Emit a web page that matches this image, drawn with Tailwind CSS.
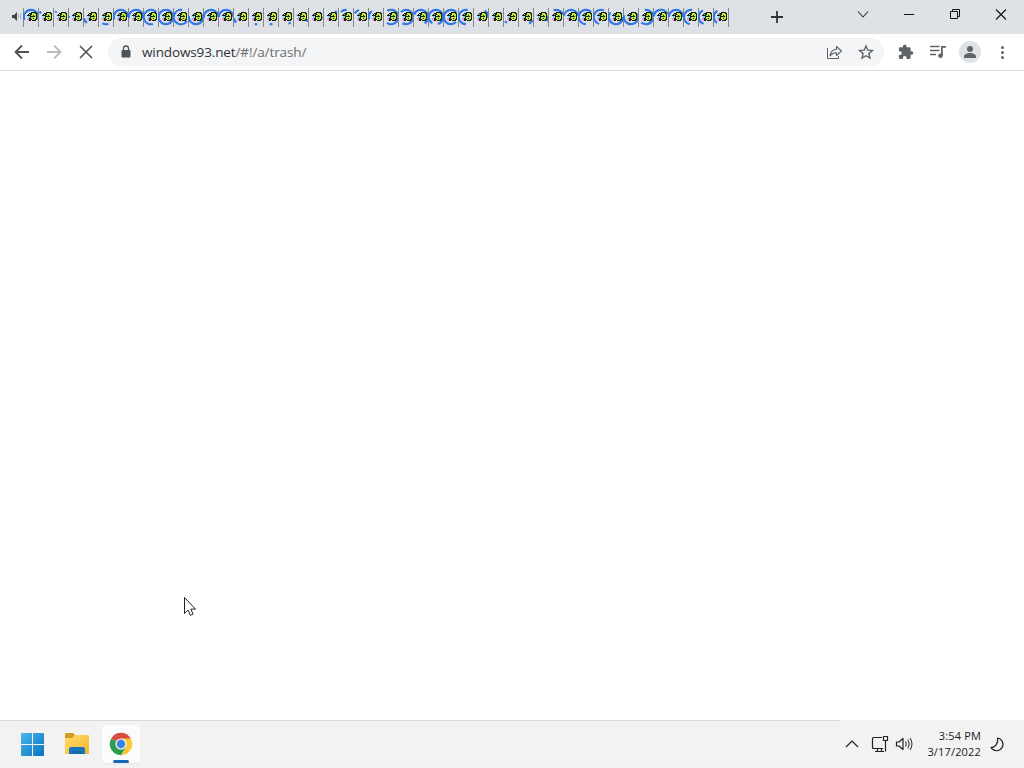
<!DOCTYPE html>
<html lang="en">
<head>
  <meta charset="UTF-8" />
  <meta name="viewport" content="width=device-width, initial-scale=1.0"/>
  <title>windows93.net</title>
  <script src="https://cdn.jsdelivr.net/npm/@tailwindcss/browser@4"></script>
</head>
<body class="w-[1024px] h-[768px] overflow-hidden flex flex-col bg-white font-['Open_Sans','Noto_Sans',sans-serif]">

  <!-- Tab strip -->
  <header class="h-[34px] shrink-0 flex bg-[#dee1e6]">
    <svg class="w-[23px] h-[34px] shrink-0" viewBox="0 0 23 34">
      <path d="M12 15h2l3-3v9l-3-3h-2z" fill="#3c4043"/>
      <path d="M18.5 14.500v4M20.500 13.500v6" stroke="#a5a8ac" stroke-width=".8"/>
    </svg>
    <div id="tabs" class="flex w-[706px] shrink-0"></div>
    <svg class="w-[96px] h-[34px] shrink-0" viewBox="729 0 96 34">
      <path d="M777 11v12M771 17h12" stroke="#303337" stroke-width="1.800"/>
    </svg>
    <svg class="w-[199px] h-[34px] shrink-0" viewBox="825 0 199 34" fill="none" stroke="#111">
      <path d="M858 11.500l5 5.500 5-5.500" stroke="#333" stroke-width="1.100"/>
      <path d="M904 14.500h10"/>
      <path d="M950.500 11.500h7v7h-7zM952.500 11v-1.500h7v7h-2"/>
      <path d="M996 9.500l10 10M1006 9.500l-10 10" stroke-width="1.100"/>
    </svg>
  </header>

  <!-- Toolbar -->
  <nav class="h-[37px] shrink-0 flex items-center border-b border-[#dadce0] bg-white">
    <svg class="w-[108px] h-9 shrink-0" viewBox="0 34 108 36" fill="none" stroke="#505356" stroke-width="1.800">
      <path d="M29 52H16M22 45.500L15.500 52l6.500 6.500"/>
      <path d="M47 52h13M54 45.500l6.500 6.500-6.500 6.500" stroke="#b9bbbe"/>
      <path d="M80 46l12 12M92 46L80 58" stroke-width="1.600"/>
    </svg>
    <div class="w-[776px] h-7 shrink-0 flex items-center rounded-full bg-[#f4f5f6]">
      <svg class="w-[34px] h-7 shrink-0" viewBox="108 38 34 28">
        <rect x="121.500" y="50" width="9" height="7.500" rx="1" fill="#505356"/>
        <path d="M123.500 50.500v-2a2.500 2.500 0 0 1 5 0v2" fill="none" stroke="#505356" stroke-width="1.300"/>
      </svg>
      <div id="address" class="w-[166px] text-[13.5px] tracking-[-0.12px] leading-7 whitespace-nowrap text-[#303236]">windows93.net<span class="text-[#6b6f73]">/#!/a/trash/</span></div>
      <svg class="ml-auto w-[64px] h-7 shrink-0" viewBox="820 38 64 28" fill="none" stroke="#5f6368">
        <path d="M827.500 48v10.500h11V56"/>
        <path d="M836.500 46.500l5 4.500-5 4.500v-2.700c-3 0-5 1-6.500 3 .5-3.500 2.500-6.300 6.500-6.600z" stroke-linejoin="round" stroke-width="1.100"/>
        <path d="M866 46l1.800 4.200 4.600.4-3.500 3 1.100 4.500-4-2.400-4 2.400 1.100-4.500-3.500-3 4.600-.4z" stroke-width="1.400"/>
      </svg>
    </div>
    <svg class="w-[140px] h-9 shrink-0" viewBox="884 34 140 36" fill="#5f6368">
      <path transform="translate(897.500 43.700) scale(.69)" d="M20.500 11H19V7c0-1.100-.9-2-2-2h-4V3.500a2.500 2.500 0 0 0-5 0V5H4c-1.100 0-2 .9-2 2v3.800h1.500a2.700 2.700 0 0 1 0 5.400H2V20c0 1.100.9 2 2 2h3.800v-1.500a2.700 2.700 0 0 1 5.400 0V22H17c1.100 0 2-.9 2-2v-4h1.500a2.500 2.500 0 0 0 0-5z"/>
      <path d="M930 46.500h9.500M930 50.500h9.500M930 54.500h6" fill="none" stroke="#5f6368" stroke-width="1.500"/>
      <path d="M941 46h5v1.800h-3.200V56h-1.800z"/>
      <circle cx="940.500" cy="55.800" r="2.300"/>
      <circle cx="970" cy="52" r="11" fill="#dee1e6"/>
      <circle cx="970" cy="49" r="3"/>
      <path d="M964 58v-1.500c0-2.300 4-3.400 6-3.400s6 1.100 6 3.400V58z"/>
      <circle cx="1002.500" cy="47.500" r="1.500"/>
      <circle cx="1002.500" cy="52.500" r="1.500"/>
      <circle cx="1002.500" cy="57.500" r="1.500"/>
    </svg>
  </nav>

  <!-- Page -->
  <main class="flex-1 relative bg-white">
    <svg class="absolute left-[183px] top-[525px] w-[14px] h-[21px]" viewBox="0 0 14 21">
      <path d="M1.500 1.500v16l3.600-3.400 2.300 5.200 2.700-1.200-2.300-5h4.700z" fill="#fff" stroke="#222"/>
    </svg>
  </main>

  <!-- Taskbar -->
  <footer class="h-12 shrink-0 flex items-start bg-[#f2f2f2]">
    <div class="w-[840px] h-12 flex items-start border-t border-[#d9d9d9]">
      <svg class="w-[102px] h-[47px] shrink-0" viewBox="0 721 102 47">
        <defs>
          <linearGradient id="win" x1="21" y1="733" x2="44" y2="756" gradientUnits="userSpaceOnUse">
            <stop stop-color="#49b8ea"/><stop offset="1" stop-color="#0873bf"/>
          </linearGradient>
          <linearGradient id="folder" x1="0" y1="0" x2="1" y2="1">
            <stop stop-color="#ffdc69"/><stop offset="1" stop-color="#f5b72d"/>
          </linearGradient>
        </defs>
        <path d="M21 734q0-1 1-1h10v11H21zM33 733h10q1 0 1 1v10H33zM21 745h11v11H22q-1 0-1-1zM33 745h11v10q0 1-1 1H33z" fill="url(#win)"/>
        <path d="M65 734q0-1 1-1h7l2 2v5H65z" fill="#d49b20"/>
        <path d="M65 738h7l3-3h13q1 0 1 1v17q0 1-1 1H66q-1 0-1-1z" fill="url(#folder)"/>
        <path d="M69 754v-5q0-2 2-2h12q2 0 2 2v5z" fill="#1976bd"/>
        <path d="M72 751h10v3H72z" fill="#1668a8"/>
      </svg>
      <div class="mt-1 w-[38px] h-[38px] rounded bg-[#fbfbfb] shadow-xs">
        <svg class="w-[38px] h-[38px]" viewBox="102 725 38 38">
          <path d="M121 744L111.300 738.400A11.200 11.200 0 0 1 130.700 738.400z" fill="#d94b40"/>
          <path d="M121 744L111.300 738.400A11.200 11.200 0 0 0 121 755.200l5-8z" fill="#2d9b50"/>
          <path d="M121 738.400h9.700A11.200 11.200 0 0 1 121 755.200l5-8.300z" fill="#fbc934"/>
          <circle cx="121" cy="744" r="5.600" fill="#fff"/>
          <circle cx="121" cy="744" r="4.400" fill="#4083e8"/>
          <rect x="113" y="760" width="16" height="3" rx="1.500" fill="#1668b5"/>
        </svg>
      </div>
    </div>
    <svg class="w-[80px] h-12 shrink-0" viewBox="840 720 80 48" fill="none" stroke="#222" stroke-width="1.200">
      <path d="M846 747l6-6 6 6"/>
      <path d="M882 737.500h-8.500q-1 0-1 1v9q0 1 1 1h9.500M877.500 748.500v3M881.500 748.500v3M875 751.500h9"/>
      <path d="M883.500 736.500h4v4h-4zM885.500 740.500v11"/>
      <path d="M896.500 742h2.500l4-3.500v11l-4-3.500h-2.500z" stroke-linejoin="round"/>
      <path d="M905.500 741.500q1.600 2.500 0 5M907.800 739.600q3 4.400 0 8.800M910 738q4 6 0 12" stroke-width="1"/>
    </svg>
    <div class="w-[61px] h-12 flex flex-col justify-center text-right text-[11px] tracking-[0.17px] leading-4 whitespace-nowrap text-[#1b1b1b]">
      <div id="time">3:54 PM</div>
      <div id="date">3/17/2022</div>
    </div>
    <svg class="w-[43px] h-12" viewBox="981 720 43 48" fill="none" stroke="#222" stroke-width="1.200">
      <path d="M997.500 738A6.400 6.400 0 1 1 991 747.500C995.500 747.500 998.500 743 997.500 738z" stroke-linejoin="round"/>
    </svg>
  </footer>

<script>
  // Spinner arc of each tab: start and end angle, clockwise from the top
  const arcs = [
    [-115, 110], [-60, -42], [-52, -38], [-95, -80], [215, 260], [160, 210],
    [-110, 90], [-100, 105], [165, 410], [0, 359], [125, 370], [70, 280],
    [-100, 90], [-90, 90], [220, 260], [170, 190], [168, 190], [140, 160],
    [110, 130], [88, 103], [35, 55], [-45, 5], [-60, -15], [-110, -35],
    [-30, 215], [-45, 210], [-70, 150], [-150, 165], [135, 410], [180, 375],
    [30, 100], [0, 0], [215, 235], [115, 155], [75, 125], [-20, 70],
    [-80, 80], [180, 405], [195, 385], [90, 310], [60, 285], [-10, 220],
    [-85, 65], [-90, 90], [190, 370], [200, 335], [215, 330]
  ];

  // Flag favicon, one letter per pixel
  const flag = [
    '....kkkkk.',
    '..kkkyyykk',
    '.kckkyyyyk',
    'kkkkyykyyk',
    '.cckkkkkyk',
    '.cckyyyyyk',
    'mmkkyykyyk',
    'mmkkkyyykk',
    '.mkk.kkkk.'
  ];
  const colors = { k: '#17201b', y: '#c3ea38', c: '#6fdcec', m: '#ee92dc' };

  const point = (deg) => {
    const a = deg * Math.PI / 180;
    return `${(8 + 7.2 * Math.sin(a)).toFixed(2)} ${(17 - 7.2 * Math.cos(a)).toFixed(2)}`;
  };

  let pixels = '';
  flag.forEach((row, y) => [...row].forEach((c, x) => {
    if (c !== '.') pixels += `<rect x="${x + 4}" y="${y + 12}" width="1" height="1" fill="${colors[c]}"/>`;
  }));

  document.getElementById('tabs').innerHTML = arcs.map(([from, to]) => `
    <svg class="w-[15px] h-[34px] shrink-0" viewBox="0 0 15 34">
      <path d="M.5 8v19" stroke="#85898e" stroke-width="1"/>
      <path d="M${point(from)}A7.200 7.200 0 ${to - from > 180 ? 1 : 0} 1 ${point(to)}" fill="none" stroke="#3279e6" stroke-width="2.200"/>
      ${pixels}
    </svg>`).join('') + '<div class="w-px h-[19px] mt-2 bg-[#85898e] shrink-0"></div>';
</script>
</body>
</html>
